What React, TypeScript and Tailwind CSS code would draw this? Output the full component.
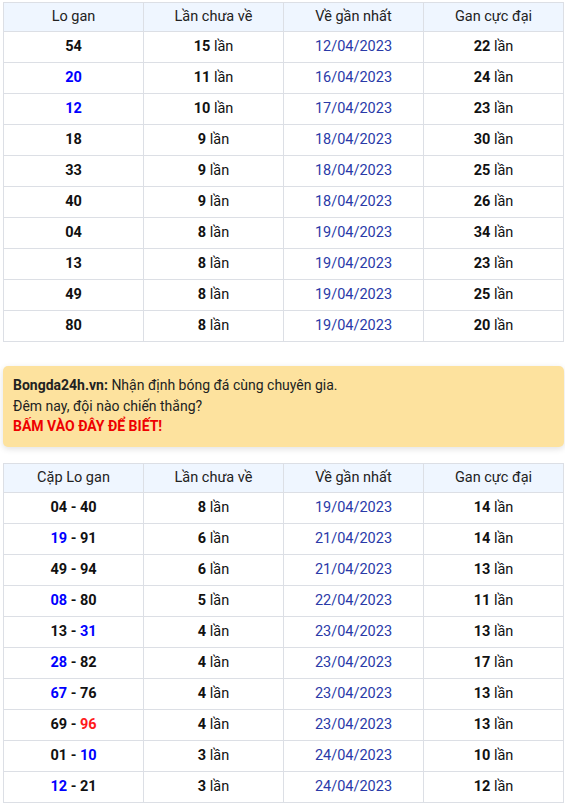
import React from 'react'

type Part = { t: string; c?: 'blue' | 'red' }

const table1: [Part[], string, string, string][] = [
  [[{ t: '54' }], '15', '12/04/2023', '22'],
  [[{ t: '20', c: 'blue' }], '11', '16/04/2023', '24'],
  [[{ t: '12', c: 'blue' }], '10', '17/04/2023', '23'],
  [[{ t: '18' }], '9', '18/04/2023', '30'],
  [[{ t: '33' }], '9', '18/04/2023', '25'],
  [[{ t: '40' }], '9', '18/04/2023', '26'],
  [[{ t: '04' }], '8', '19/04/2023', '34'],
  [[{ t: '13' }], '8', '19/04/2023', '23'],
  [[{ t: '49' }], '8', '19/04/2023', '25'],
  [[{ t: '80' }], '8', '19/04/2023', '20'],
]

const table2: [Part[], string, string, string][] = [
  [[{ t: '04' }, { t: ' - ' }, { t: '40' }], '8', '19/04/2023', '14'],
  [[{ t: '19', c: 'blue' }, { t: ' - ' }, { t: '91' }], '6', '21/04/2023', '14'],
  [[{ t: '49' }, { t: ' - ' }, { t: '94' }], '6', '21/04/2023', '13'],
  [[{ t: '08', c: 'blue' }, { t: ' - ' }, { t: '80' }], '5', '22/04/2023', '11'],
  [[{ t: '13' }, { t: ' - ' }, { t: '31', c: 'blue' }], '4', '23/04/2023', '13'],
  [[{ t: '28', c: 'blue' }, { t: ' - ' }, { t: '82' }], '4', '23/04/2023', '17'],
  [[{ t: '67', c: 'blue' }, { t: ' - ' }, { t: '76' }], '4', '23/04/2023', '13'],
  [[{ t: '69' }, { t: ' - ' }, { t: '96', c: 'red' }], '4', '23/04/2023', '13'],
  [[{ t: '01' }, { t: ' - ' }, { t: '10', c: 'blue' }], '3', '24/04/2023', '10'],
  [[{ t: '12', c: 'blue' }, { t: ' - ' }, { t: '21' }], '3', '24/04/2023', '12'],
]

const Cell = ({ children, head }: { children: React.ReactNode; head?: boolean }) => (
  <td className={`w-1/4 border border-[#dcdfe5] text-center ${head ? 'h-[29px]' : 'h-[31px]'}`}>
    {children}
  </td>
)

const GanTable = (props: { first: string; rows: [Part[], string, string, string][] }) => (
  <table className="w-full table-fixed border-collapse text-[14.5px] text-[#111]">
    <thead>
      <tr className="bg-[#eff6ff] text-[#222]">
        <Cell head>{props.first}</Cell>
        <Cell head>Lần chưa về</Cell>
        <Cell head>Về gần nhất</Cell>
        <Cell head>Gan cực đại</Cell>
      </tr>
    </thead>
    <tbody>
      {props.rows.map((r, i) => (
        <tr key={i}>
          <Cell>
            <span className="font-bold">
              {r[0].map((p, j) => (
                <span
                  key={j}
                  className={p.c === 'blue' ? 'text-[#0000ff]' : p.c === 'red' ? 'text-[#ff1a1a]' : ''}
                >
                  {p.t}
                </span>
              ))}
            </span>
          </Cell>
          <Cell>
            <span className="font-bold">{r[1]}</span> lần
          </Cell>
          <Cell>
            <span className="text-[#2a3aa8]">{r[2]}</span>
          </Cell>
          <Cell>
            <span className="font-bold">{r[3]}</span> lần
          </Cell>
        </tr>
      ))}
    </tbody>
  </table>
)

export default function App() {
  return (
    <div className="bg-white pl-[3px] pr-[1px] pt-[2px] font-['Roboto',sans-serif]">
      <GanTable first="Lo gan" rows={table1} />

      <div className="mt-[24px] rounded-[5px] bg-[#fde29e] px-[10px] pt-[9px] pb-[10px] text-[14px] leading-[20.5px] text-[#222] shadow-[0_2px_6px_rgba(0,0,0,0.12)]">
        <div>
          <span className="font-bold">Bongda24h.vn:</span> Nhận định bóng đá cùng chuyên gia.
        </div>
        <div>Đêm nay, đội nào chiến thắng?</div>
        <div className="font-bold text-[#ee0000]">BẤM VÀO ĐÂY ĐỂ BIẾT!</div>
      </div>

      <div className="mt-[16px]">
        <GanTable first="Cặp Lo gan" rows={table2} />
      </div>
    </div>
  )
}
